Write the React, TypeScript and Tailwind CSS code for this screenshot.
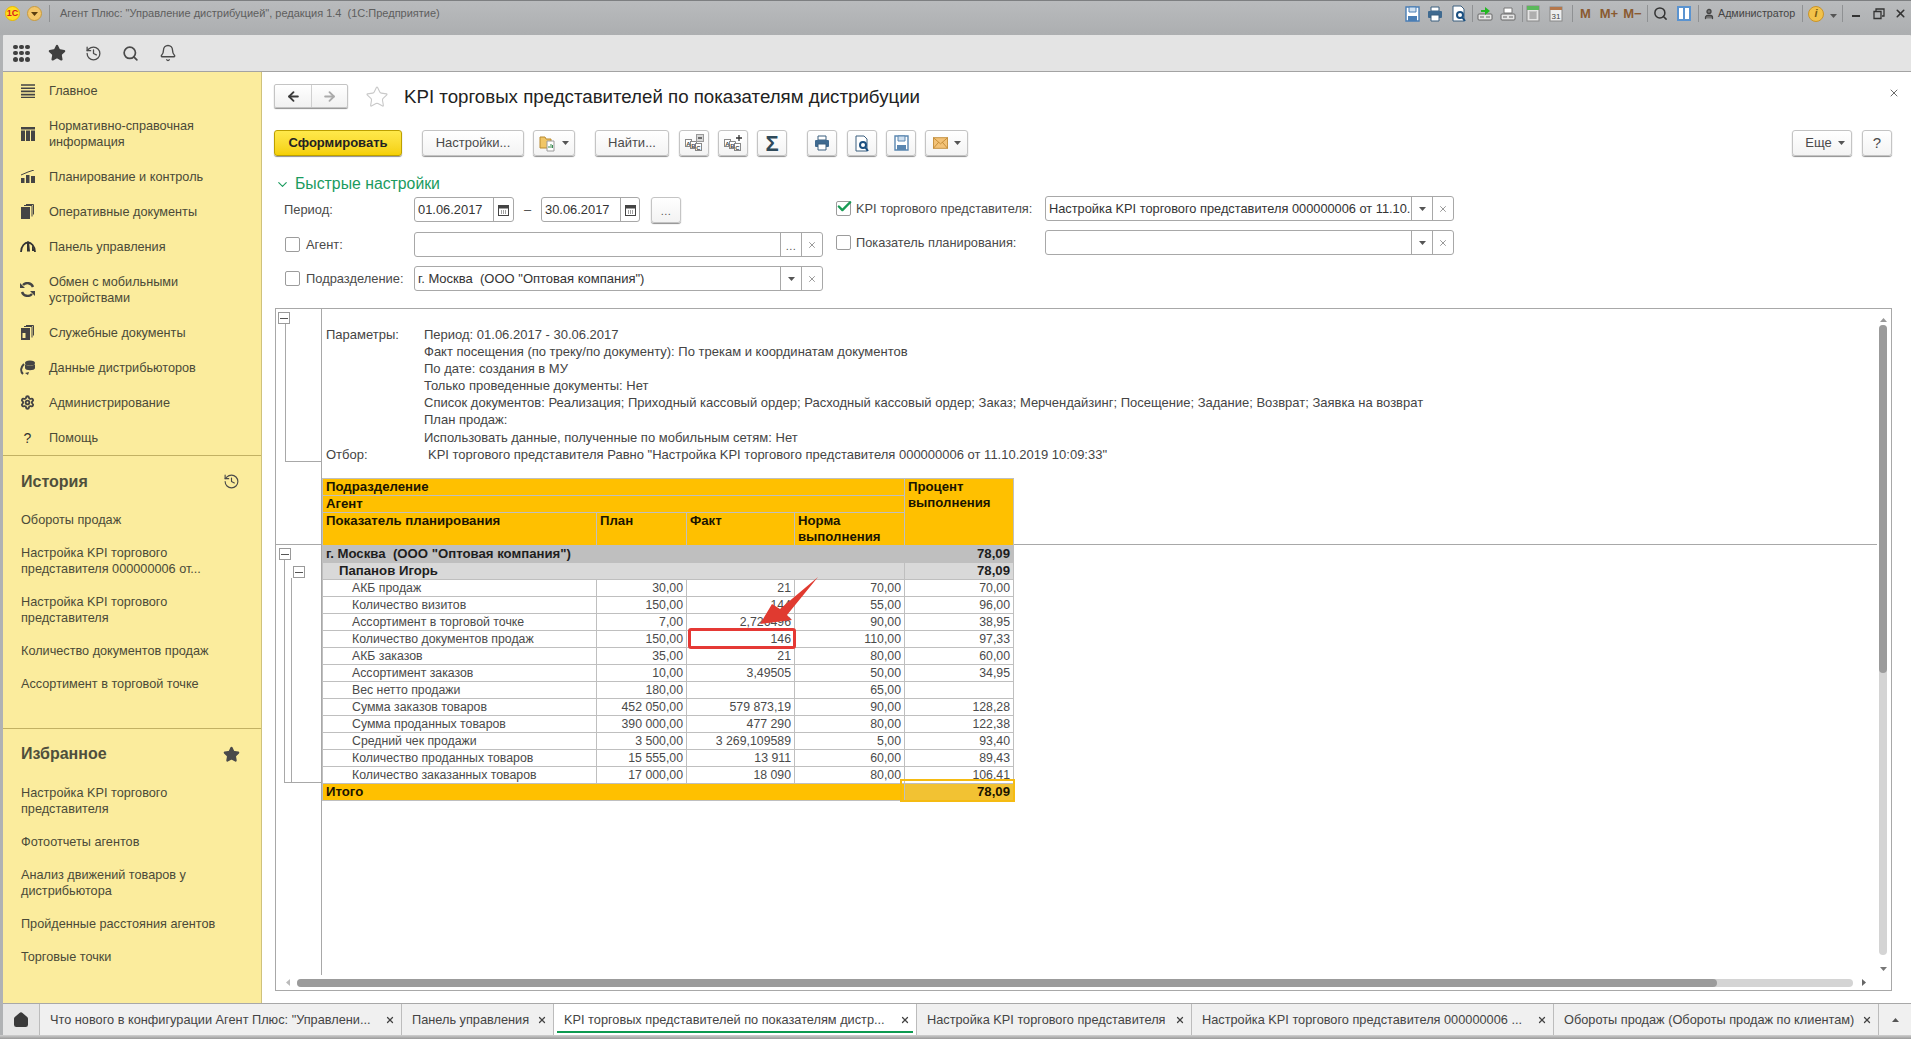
import React from "react";
import { History, Search, Bell, Star, ArrowLeft, ArrowRight, ChevronDown, Check, X, Settings, Home, User } from "lucide-react";

const Tri = ({ c = "#555" }: { c?: string }) => (
  <svg width="7" height="4" viewBox="0 0 7 4"><path d="M0 0h7L3.5 4z" fill={c} /></svg>
);
const Sep = ({ className = "" }: { className?: string }) => <div className={"w-px h-[17px] bg-[#8f9193] " + className} />;

const SaveIco = ({ c = "#4a7eb5" }: { c?: string }) => (
  <svg width="15" height="16" viewBox="0 0 15 16"><path d="M1 1h13v14H1z" fill="#fff" stroke={c} strokeWidth="1.4" /><path d="M4 1h7v5H4z" fill="#cfe0f0" stroke={c} /><path d="M3 10h9v5H3z" fill={c} /></svg>
);
const PrintIco = () => (
  <svg width="16" height="16" viewBox="0 0 16 16"><path d="M4 1h8v4H4z" fill="#fff" stroke="#3b5e7e" /><rect x="1" y="5" width="14" height="7" rx="1" fill="#3f6a90" /><path d="M4 9h8v6H4z" fill="#fff" stroke="#3b5e7e" /></svg>
);
const PreviewIco = () => (
  <svg width="16" height="17" viewBox="0 0 16 17"><path d="M2 1h8l3 3v12H2z" fill="#fff" stroke="#3b5e7e" /><circle cx="9" cy="10" r="3" fill="none" stroke="#1a4f80" strokeWidth="2" /><path d="M11 12l3 4" stroke="#1a4f80" strokeWidth="2" /></svg>
);
const PostIco = ({ green = false }: { green?: boolean }) => (
  <svg width="16" height="16" viewBox="0 0 16 16"><path d="M4 2h8v5H4z" fill={green ? "none" : "#fff"} stroke={green ? "none" : "#777"} /><rect x="1" y="8" width="14" height="6" rx="1" fill="#e6e6e6" stroke="#666" /><path d="M3 11h4M9 11h4" stroke="#666" />{green && <path d="M4 4h4V1l5 4-5 4V6H4z" fill="#22b822" />}</svg>
);
const CalcIco = () => (
  <svg width="14" height="17" viewBox="0 0 14 17"><rect x="1" y="1" width="12" height="15" fill="#e4e4e4" stroke="#888" /><path d="M1 1h12v4H1z" fill="#5cb85c" /><path d="M3 7h8M3 9h8M3 11h8M3 13h8M5 7v7M7 7v7M9 7v7" stroke="#888" strokeWidth=".7" /></svg>
);
const CalIco = () => (
  <svg width="14" height="17" viewBox="0 0 14 17"><rect x="1" y="2" width="12" height="14" fill="#eee" stroke="#888" /><path d="M1 2h12v3H1z" fill="#b5774a" /><text x="7" y="14" textAnchor="middle" fontSize="8" fill="#444" fontFamily="Liberation Sans">31</text></svg>
);
const AbcIco = ({ plus }: { plus?: boolean }) => (
  <svg width="20" height="18" viewBox="0 0 20 18">
    <rect x="1.500" y="5.500" width="6" height="7" fill="#fff" stroke="#888" />
    <rect x="6.500" y="7.500" width="6" height="7" fill="#fff" stroke="#888" />
    <rect x="11.500" y="9.500" width="6" height="7" fill="#fff" stroke="#888" />
    <text x="4.500" y="11.500" textAnchor="middle" fontSize="6" fontWeight="700" fill="#444" fontFamily="Liberation Sans">A</text>
    <text x="9.500" y="13.500" textAnchor="middle" fontSize="6" fontWeight="700" fill="#444" fontFamily="Liberation Sans">B</text>
    <text x="14.500" y="15.500" textAnchor="middle" fontSize="6" fontWeight="700" fill="#444" fontFamily="Liberation Sans">C</text>
    <rect x="12.500" y=".5" width="7" height="7" fill={plus ? "#fff" : "#d8d8d8"} stroke={plus ? "none" : "#999"} />
    <path d={plus ? "M13 4h6M16 1v6" : "M14 4h4"} stroke="#333" strokeWidth="1.3" />
  </svg>
);

const Btn = ({ className = "", children }: { className?: string; children?: React.ReactNode }) => (
  <div className={"h-[26px] flex items-center justify-center border border-[#c4c4c4] rounded-[3px] bg-gradient-to-b from-white to-[#f3f3f3] shadow-[0_1px_1px_#8f8f8f] text-[#4a4a4a] text-[13px] " + className}>{children}</div>
);

const Cb = ({ on = false }: { on?: boolean }) => (
  <div className="w-[15px] h-[15px] border border-[#9c9c9c] rounded-[2px] bg-white relative shrink-0">
    {on && <Check className="absolute left-[-1px] top-[-4px] text-[#1a9b55]" size={17} strokeWidth={3.4} />}
  </div>
);

const Cell = ({ className = "", children }: { className?: string; children?: React.ReactNode }) => (
  <div className={"flex items-center justify-center self-stretch border-l border-[#a8a8a8] text-[#666] " + className}>{children}</div>
);
const XS = () => <X size={10} strokeWidth={1.6} className="text-[#666]" />;
const Dots = () => <span className="text-[11px] text-[#555] tracking-[0.5px] mt-[3px]">...</span>;
const CalSm = () => (
  <svg width="11" height="12" viewBox="0 0 11 12"><rect x=".5" y="1.5" width="10" height="10" fill="#fff" stroke="#444" /><path d="M.5 1.5h10v3H.5z" fill="#444" /><path d="M3 7h1M5 7h1M7 7h1M3 9h1M5 9h1M7 9h1" stroke="#444" /></svg>
);
const Field = ({ className = "", children }: { className?: string; children?: React.ReactNode }) => (
  <div className={"h-[25px] flex items-stretch border border-[#a8a8a8] rounded-[3px] bg-white text-[#333] shrink-0 " + className}>{children}</div>
);

const sideNav: [string, React.ReactNode, boolean][] = [
  ["Главное", <svg width="14" height="14" viewBox="0 0 14 14"><path d="M0 1h14M0 4.200h14M0 7.400h14M0 10.600h14M0 13.500h14" stroke="#444" strokeWidth="1.6" /></svg>, false],
  ["Нормативно-справочная\nинформация", <svg width="14" height="14" viewBox="0 0 14 14"><path d="M0 0h14v2.500H0zM0 3.500h4v10.500H0zM5 3.500h4v10.500H5zM10 3.500h4v10.500h-4z" fill="#444" /></svg>, true],
  ["Планирование и контроль", <svg width="14" height="13" viewBox="0 0 14 13"><path d="M0 8h3.500v5H0zM5 5h3.500v8H5zM10 6h4v7h-4z" fill="#444" /><path d="M0 5L7 2l6-2" stroke="#444" fill="none" /></svg>, false],
  ["Оперативные документы", <svg width="13" height="15" viewBox="0 0 13 15"><path d="M0 3h9v12H0z" fill="#444" /><path d="M3 1.500h8v11M5 .5h7.500v10" stroke="#444" fill="none" /></svg>, false],
  ["Панель управления", <svg width="16" height="11" viewBox="0 0 16 11"><path d="M1 11C1 5 5 1.500 8 1.500S15 5 15 11" stroke="#333" strokeWidth="1.800" fill="none" /><path d="M7 .5h2l1 10H7z" fill="#333" /><path d="M12 4l3 6-3 0z" fill="#333" /></svg>, false],
  ["Обмен с мобильными\nустройствами", <svg width="15" height="15" viewBox="0 0 15 15"><path d="M13 5A6 6 0 0 0 3 3M2 10a6 6 0 0 0 10 2" stroke="#444" strokeWidth="2.400" fill="none" /><path d="M0 1v5h5zM15 14V9h-5z" fill="#444" /></svg>, true],
  ["Служебные документы", <svg width="13" height="15" viewBox="0 0 13 15"><path d="M0 3h9v12H0z" fill="#444" /><path d="M1.500 8h3v5h-3z" fill="#fbec9d" /><path d="M3 1.500h8v11M5 .5h7.500v10" stroke="#444" fill="none" /></svg>, false],
  ["Данные дистрибьюторов", <svg width="16" height="15" viewBox="0 0 16 15"><ellipse cx="10" cy="3" rx="5" ry="2.500" fill="#444" /><path d="M5 4v4c0 3 10 3 10 0V4c-1 2-9 2-10 0z" fill="#444" /><path d="M4 4C1 7 0 11 3 14" stroke="#444" strokeWidth="2" fill="none" /><path d="M9 12l-1 3-3-2z" fill="#444" /></svg>, false],
  ["Администрирование", <Settings size={15} strokeWidth={3} className="text-[#444]" />, false],
  ["Помощь", <span className="text-[14px] text-[#333] leading-none">?</span>, false],
];

const hist: [string, boolean][] = [
  ["Обороты продаж", false],
  ["Настройка KPI торгового\nпредставителя 000000006 от...", true],
  ["Настройка KPI торгового\nпредставителя", true],
  ["Количество документов продаж", false],
  ["Ассортимент в торговой точке", false],
];
const fav: [string, boolean][] = [
  ["Настройка KPI торгового\nпредставителя", true],
  ["Фотоотчеты агентов", false],
  ["Анализ движений товаров у\nдистрибьютора", true],
  ["Пройденные расстояния агентов", false],
  ["Торговые точки", false],
];

const params = [
  "Период: 01.06.2017 - 30.06.2017",
  "Факт посещения (по треку/по документу): По трекам и координатам документов",
  "По дате: создания в МУ",
  "Только проведенные документы: Нет",
  "Список документов: Реализация; Приходный кассовый ордер; Расходный кассовый ордер; Заказ; Мерчендайзинг; Посещение; Задание; Возврат; Заявка на возврат",
  "План продаж:",
  "Использовать данные, полученные по мобильным сетям: Нет",
];

const rows = [
  ["АКБ продаж", "30,00", "21", "70,00", "70,00"],
  ["Количество визитов", "150,00", "144", "55,00", "96,00"],
  ["Ассортимент в торговой точке", "7,00", "2,726496", "90,00", "38,95"],
  ["Количество документов продаж", "150,00", "146", "110,00", "97,33"],
  ["АКБ заказов", "35,00", "21", "80,00", "60,00"],
  ["Ассортимент заказов", "10,00", "3,49505", "50,00", "34,95"],
  ["Вес нетто продажи", "180,00", "", "65,00", ""],
  ["Сумма заказов товаров", "452 050,00", "579 873,19", "90,00", "128,28"],
  ["Сумма проданных товаров", "390 000,00", "477 290", "80,00", "122,38"],
  ["Средний чек продажи", "3 500,00", "3 269,109589", "5,00", "93,40"],
  ["Количество проданных товаров", "15 555,00", "13 911", "60,00", "89,43"],
  ["Количество заказанных товаров", "17 000,00", "18 090", "80,00", "106,41"],
];

const Cols = () => (
  <colgroup>
    <col className="w-[274px]" /><col className="w-[90px]" /><col className="w-[108px]" /><col className="w-[110px]" /><col className="w-[109px]" />
  </colgroup>
);
const tdN = "h-[17px] p-0 px-[3px] border border-[#bfbfbf] text-[12.3px] leading-[14px] whitespace-nowrap overflow-hidden";
const tdB = "h-[17px] p-0 px-[3px] border border-[#bfbfbf] text-[13.2px] leading-[16px] whitespace-nowrap overflow-hidden";
const Minus = () => (
  <div className="w-[12px] h-[12px] border border-[#9a9a9a] bg-white flex items-center justify-center shrink-0"><div className="w-[8px] h-px bg-[#555]" /></div>
);

const tabs: [string, string, boolean][] = [
  ["Что нового в конфигурации Агент Плюс: \"Управлени...", "w-[362px]", false],
  ["Панель управления", "w-[152px]", false],
  ["KPI торговых представителей по показателям дистр...", "w-[363px]", true],
  ["Настройка KPI торгового представителя", "w-[275px]", false],
  ["Настройка KPI торгового представителя 000000006 ...", "w-[362px]", false],
  ["Обороты продаж (Обороты продаж по клиентам)", "w-[325px]", false],
];

export default function App() {
  return (
    <div className="w-[1911px] h-[1039px] overflow-hidden flex flex-col font-['Liberation_Sans',Arial,sans-serif] bg-[#b0b2b4]">
      {/* title bar */}
      <div className="h-[35px] shrink-0 flex items-center pb-[9px] border-t border-[#7d7f81] bg-gradient-to-b from-[#b9bbbd] to-[#acaeb0] text-[11px] text-[#5e5e5e]">
        <div className="ml-[5px] w-[15px] h-[15px] rounded-full bg-[#ffdd22] border border-[#e8b800] flex items-center justify-center text-[9px] font-bold text-[#d8201c] leading-none">1С</div>
        <div className="ml-[7px] w-[15px] h-[15px] rounded-full bg-[#f3c66a] border border-[#c69a40] flex items-center justify-center"><Tri c="#5a3e10" /></div>
        <Sep className="ml-[7px]" />
        <span className="ml-[10px] w-[1341px] shrink-0">Агент Плюс: "Управление дистрибуцией", редакция 1.4&nbsp; (1С:Предприятие)</span>
        <div className="flex items-center">
          <div className="w-[23px] flex justify-center"><SaveIco /></div>
          <div className="w-[22px] flex justify-center"><PrintIco /></div>
          <div className="w-[26px] flex justify-center"><PreviewIco /></div>
          <Sep />
          <div className="w-[24px] flex justify-center"><PostIco green /></div>
          <div className="w-[22px] flex justify-center"><PostIco /></div>
          <Sep className="ml-[3px]" />
          <div className="w-[20px] flex justify-center"><CalcIco /></div>
          <div className="w-[26px] flex justify-center"><CalIco /></div>
          <Sep className="ml-[3px]" />
          <div className="ml-[1px] w-[23px] text-center font-bold text-[13px] text-[#8a5a30]">M</div>
          <div className="w-[24px] text-center font-bold text-[13px] text-[#8a5a30]">M+</div>
          <div className="w-[23px] text-center font-bold text-[13px] text-[#8a5a30]">M−</div>
          <Sep className="ml-[3px]" />
          <div className="w-[24px] flex justify-center"><Search size={15} strokeWidth={2.4} className="text-[#333]" /></div>
          <div className="w-[23px] flex justify-center"><div className="w-[14px] h-[15px] border-2 border-[#5a93d0] bg-white flex justify-center"><div className="w-[2px] bg-[#5a93d0]" /></div></div>
          <Sep className="ml-[3px]" />
          <User size={12} strokeWidth={2.6} className="ml-[4px] text-[#444] fill-[#777]" />
          <span className="ml-[3px] w-[78px] text-[10.7px] text-[#444] whitespace-nowrap">Администратор</span>
          <Sep className="ml-[6px]" />
          <div className="ml-[5px] w-[16px] h-[16px] rounded-full bg-[#f2c24a] border border-[#c9942a] flex items-center justify-center text-[11px] font-bold italic text-[#7a5a10]">i</div>
          <div className="ml-[6px] mt-[5px]"><Tri /></div>
          <Sep className="ml-[5px]" />
          <div className="ml-[9px] w-[8px] h-[2px] bg-[#333] mt-[5px]" />
          <svg className="ml-[13px]" width="12" height="12" viewBox="0 0 12 12"><path d="M3 3V1h8v7H9M1 3.500h7v7H1z" fill="none" stroke="#333" strokeWidth="1.300" /></svg>
          <X className="ml-[9px] text-[#333]" size={13} strokeWidth={3} />
        </div>
      </div>
      {/* toolbar */}
      <div className="h-[37px] shrink-0 ml-[3px] flex items-center bg-[#e4e4e4] border-b border-[#a3a3a3] rounded-t-[1px]">
        <div className="ml-[10px] w-[17px] h-[17px] grid grid-cols-3 gap-[1.500px]">
          {[0, 1, 2, 3, 4, 5, 6, 7, 8].map((i) => <div key={i} className="rounded-full bg-[#3f3f3f]" />)}
        </div>
        <Star className="ml-[18px] text-[#3f3f3f] fill-[#3f3f3f]" size={18} />
        <History className="ml-[19px] text-[#4a4a4a]" size={17} strokeWidth={1.8} />
        <Search className="ml-[20px] text-[#4a4a4a]" size={17} strokeWidth={2.4} />
        <Bell className="ml-[20px] text-[#4a4a4a]" size={18} strokeWidth={1.8} />
      </div>
      {/* middle */}
      <div className="flex-1 min-h-0 ml-[3px] flex">
        <aside className="w-[259px] shrink-0 bg-[#fbec9d] border-r border-[#cfc27c] flex flex-col text-[12.7px] leading-[16px] text-[#4a4a38]">
          <nav className="pt-[1px] border-b border-[#c2b163]">
            {sideNav.map(([t, ico, dbl]) => (
              <div key={t} className={"flex items-center " + (dbl ? "h-[51px]" : "h-[35px]")}>
                <div className="w-[46px] pl-[3px] flex justify-center shrink-0">{ico}</div>
                <span className="whitespace-pre-line">{t}</span>
              </div>
            ))}
          </nav>
          <div className="h-[273px] border-b border-[#c2b163] pl-[18px]">
            <div className="h-[47px] pt-[4px] flex items-center justify-between pr-[21px] font-bold text-[16px] text-[#4f4f3c]">
              <span>История</span><History size={17} strokeWidth={1.6} className="text-[#4a4a4a]" />
            </div>
            {hist.map(([t, dbl]) => (
              <div key={t} className={"flex items-center whitespace-pre-line " + (dbl ? "h-[49px]" : "h-[33px]")}>{t}</div>
            ))}
          </div>
          <div className="pl-[18px]">
            <div className="h-[47px] pt-[3px] flex items-center justify-between pr-[21px] font-bold text-[16px] text-[#4f4f3c]">
              <span>Избранное</span><Star size={17} className="text-[#4a4a4a] fill-[#4a4a4a]" />
            </div>
            {fav.map(([t, dbl]) => (
              <div key={t} className={"flex items-center whitespace-pre-line " + (dbl ? "h-[49px]" : "h-[33px]")}>{t}</div>
            ))}
          </div>
        </aside>
        <main className="flex-1 min-w-0 bg-white pl-[12px] pr-[19px] flex flex-col">
          {/* header */}
          <div className="h-[24px] mt-[12px] flex items-center shrink-0">
            <div className="w-[74px] h-[24px] flex border border-[#c4c4c4] rounded-[2px] shadow-[0_1px_1px_#8f8f8f] bg-gradient-to-b from-white to-[#f1f1f1]">
              <div className="w-[37px] flex items-center justify-center border-r border-[#d0d0d0]"><ArrowLeft size={15} strokeWidth={3} className="text-[#3a3a3a]" /></div>
              <div className="flex-1 flex items-center justify-center"><ArrowRight size={15} strokeWidth={3} className="text-[#aaa]" /></div>
            </div>
            <Star className="ml-[17px] mt-[2px] text-[#c9c9c9]" size={24} strokeWidth={1.1} />
            <h1 className="ml-[15px] mt-[3px] text-[18.7px] font-normal text-[#222]">KPI торговых представителей по показателям дистрибуции</h1>
            <X size={12} strokeWidth={1.6} className="ml-auto mr-[-8px] mb-[6px] text-[#444]" />
          </div>
          {/* commands */}
          <div className="mt-[22px] flex shrink-0 items-center">
            <div className="w-[128px] h-[26px] flex items-center justify-center rounded-[3px] border border-[#bda000] bg-gradient-to-b from-[#ffe94a] to-[#f5d000] shadow-[0_1px_1px_#8f8f8f] font-bold text-[13px] text-[#222]">Сформировать</div>
            <Btn className="ml-[20px] w-[102px]">Настройки...</Btn>
            <Btn className="ml-[9px] w-[42px] gap-[5px]">
              <svg width="18" height="18" viewBox="0 0 18 18"><path d="M1 3h5l1 2h5v9H1z" fill="#f1c667" stroke="#b88a30" /><path d="M8 7h7v10H8z" fill="#fff" stroke="#999" /><path d="M10 14v-2M12 14v-4M13.500 14v-3" stroke="#3a8a50" /></svg>
              <Tri />
            </Btn>
            <Btn className="ml-[20px] w-[74px]">Найти...</Btn>
            <Btn className="ml-[10px] w-[30px]"><AbcIco /></Btn>
            <Btn className="ml-[9px] w-[30px]"><AbcIco plus /></Btn>
            <Btn className="ml-[9px] w-[30px] text-[22px] font-bold !text-[#2f4a5a]">Σ</Btn>
            <Btn className="ml-[20px] w-[30px]"><PrintIco /></Btn>
            <Btn className="ml-[10px] w-[30px]"><PreviewIco /></Btn>
            <Btn className="ml-[9px] w-[30px]"><SaveIco c="#5a86b0" /></Btn>
            <Btn className="ml-[9px] w-[43px] gap-[6px]">
              <svg width="15" height="12" viewBox="0 0 17 13"><rect x=".5" y=".5" width="16" height="12" fill="#f3c277" stroke="#c08a35" /><path d="M.5 .5l8 7 8-7M.5 12.500l6-7M16.500 12.500l-6-7" stroke="#c08a35" fill="none" /></svg>
              <Tri />
            </Btn>
            <Btn className="ml-auto w-[60px] gap-[6px] pl-[6px]">Еще <Tri /></Btn>
            <Btn className="ml-[10px] w-[30px] text-[15px]">?</Btn>
          </div>
          {/* quick */}
          <div className="mt-[18px] h-[20px] flex items-center shrink-0 text-[15.8px] text-[#1a9b5e]">
            <ChevronDown size={15} strokeWidth={1.8} className="ml-[1px]" />
            <span className="ml-[5px]">Быстрые настройки</span>
          </div>
          <div className="mt-[2px] flex shrink-0 text-[12.9px] text-[#4a4a4a]">
            <div className="mt-[1px] w-[562px] shrink-0 flex flex-col">
              <div className="h-[25px] flex items-center">
                <span className="ml-[10px] w-[130px] shrink-0">Период:</span>
                <Field className="w-[100px]"><span className="w-[78px] pl-[3px] leading-[23px]">01.06.2017</span><Cell className="flex-1"><CalSm /></Cell></Field>
                <span className="w-[27px] text-center">–</span>
                <Field className="w-[99px]"><span className="w-[78px] pl-[3px] leading-[23px]">30.06.2017</span><Cell className="flex-1"><CalSm /></Cell></Field>
                <Btn className="ml-[11px] w-[30px] h-[26px]"><Dots /></Btn>
              </div>
              <div className="h-[25px] mt-[10px] flex items-center">
                <div className="ml-[11px]"><Cb /></div>
                <span className="ml-[6px] w-[108px] shrink-0">Агент:</span>
                <Field className="w-[409px]"><span className="flex-1" /><Cell className="w-[21px]"><Dots /></Cell><Cell className="w-[21px]"><XS /></Cell></Field>
              </div>
              <div className="h-[25px] mt-[9px] flex items-center">
                <div className="ml-[11px]"><Cb /></div>
                <span className="ml-[6px] w-[108px] shrink-0">Подразделение:</span>
                <Field className="w-[409px]"><span className="flex-1 pl-[3px] leading-[23px] text-[13px]">г. Москва&nbsp; (ООО "Оптовая компания")</span><Cell className="w-[21px]"><Tri /></Cell><Cell className="w-[21px]"><XS /></Cell></Field>
              </div>
            </div>
            <div className="flex flex-col text-[12.8px]">
              <div className="h-[25px] flex items-center">
                <Cb on />
                <span className="ml-[5px] w-[189px] shrink-0">KPI торгового представителя:</span>
                <Field className="w-[409px]"><span className="flex-1 pl-[3px] leading-[23px] overflow-hidden whitespace-nowrap">Настройка KPI торгового представителя 000000006 от 11.10.</span><Cell className="w-[21px]"><Tri /></Cell><Cell className="w-[21px]"><XS /></Cell></Field>
              </div>
              <div className="h-[25px] mt-[9px] flex items-center">
                <Cb />
                <span className="ml-[5px] w-[189px] shrink-0">Показатель планирования:</span>
                <Field className="w-[409px]"><span className="flex-1" /><Cell className="w-[21px]"><Tri /></Cell><Cell className="w-[21px]"><XS /></Cell></Field>
              </div>
            </div>
          </div>
          {/* report */}
          <div className="ml-px mt-[17px] h-[683px] shrink-0 border border-[#a8a8a8] flex flex-col text-[#444]">
            <div className="flex-1 min-h-0 flex">
              <div className="flex-1 min-w-0 flex flex-col">
                <div className="h-[236px] shrink-0 flex border-b border-[#a8a8a8]">
                  <div className="w-[46px] shrink-0 border-r border-[#a8a8a8]">
                    <div className="ml-[2px] mt-[3px]"><Minus /></div>
                    <div className="ml-[9px] w-[36px] h-[138px] border-l border-b border-[#a8a8a8]" />
                  </div>
                  <div className="flex-1 min-w-0">
                    <div className="pt-[17px] pl-[4px] text-[13px] leading-[17.100px] text-[#444]">
                      <div className="flex"><span className="w-[98px] shrink-0">Параметры:</span><div>{params.map((p) => <div key={p} className="whitespace-nowrap">{p}</div>)}</div></div>
                      <div className="flex"><span className="w-[102px] shrink-0">Отбор:</span><span className="whitespace-nowrap">KPI торгового представителя Равно "Настройка KPI торгового представителя 000000006 от 11.10.2019 10:09:33"</span></div>
                    </div>
                    <table className="mt-[15px] table-fixed border-collapse w-[691px] bg-[#ffc000] text-[#1a1400] font-bold">
                      <Cols />
                      <tbody>
                        <tr><td colSpan={4} className={tdB}>Подразделение</td><td rowSpan={3} className={tdB + " align-top"}>Процент<br />выполнения</td></tr>
                        <tr><td colSpan={4} className={tdB}>Агент</td></tr>
                        <tr className="align-top">
                          <td className={tdB}>Показатель планирования</td>
                          <td className={tdB}>План</td>
                          <td className={tdB}>Факт</td>
                          <td className={tdB}>Норма<br />выполнения</td>
                        </tr>
                      </tbody>
                    </table>
                  </div>
                </div>
                <div className="flex-1 min-h-0 flex">
                  <div className="w-[46px] shrink-0 border-r border-[#a8a8a8]">
                    <div className="ml-[3px] mt-[3px]"><Minus /></div>
                    <div className="ml-[8px] w-[37px] h-[223px] border-l border-b border-[#a8a8a8]">
                      <div className="ml-[8px] pt-[6px]"><Minus /></div>
                      <div className="ml-[6px] h-[205px] border-l border-[#a8a8a8]" />
                    </div>
                  </div>
                  <div className="flex-1 min-w-0">
                    <div className="relative w-[700px]">
                      <table className="table-fixed border-collapse w-[691px] text-[#4a4a4a]">
                        <Cols />
                        <tbody>
                          <tr className="bg-[#bfbfbf] font-bold text-[#1e1e1e]">
                            <td colSpan={4} className={tdB}>г. Москва&nbsp; (ООО "Оптовая компания")</td>
                            <td className={tdB + " text-right"}>78,09</td>
                          </tr>
                          <tr className="bg-[#d9d9d9] font-bold text-[#1e1e1e]">
                            <td colSpan={4} className={tdB + " pl-[16px]"}>Папанов Игорь</td>
                            <td className={tdB + " text-right"}>78,09</td>
                          </tr>
                          {rows.map((r) => (
                            <tr key={r[0]}>
                              <td className={tdN + " pl-[29px]"}>{r[0]}</td>
                              <td className={tdN + " text-right"}>{r[1]}</td>
                              <td className={tdN + " text-right"}>{r[2]}</td>
                              <td className={tdN + " text-right"}>{r[3]}</td>
                              <td className={tdN + " text-right"}>{r[4]}</td>
                            </tr>
                          ))}
                          <tr className="bg-[#ffc000] font-bold text-[#1a1400]">
                            <td colSpan={4} className={tdB}>Итого</td>
                            <td className={tdB + " text-right bg-[#f2c233]"}>78,09</td>
                          </tr>
                        </tbody>
                      </table>
                      <div className="absolute left-[366px] top-[83px] w-[108px] h-[21px] border-[3px] border-[#e53935] rounded-[3px]" />
                      <div className="absolute left-[578px] top-[234px] w-[115px] h-[23px] border-2 border-[#f5bb12]" />
                      <svg className="absolute left-[433px] top-[29px]" width="70" height="55" viewBox="0 0 70 55">
                        <path d="M5 50L17 30l8 5L63 3 32 41l5 5z" fill="#e03a30" />
                      </svg>
                    </div>
                  </div>
                </div>
              </div>
              <div className="w-[14px] shrink-0 flex flex-col items-center relative pr-[2px]">
                <div className="mt-[9px]"><div className="rotate-180"><Tri c="#999" /></div></div>
                <div className="mt-[3px] w-[8px] flex-1 rounded-full bg-[#d4d4d4] mb-[12px]">
                  <div className="w-[8px] h-[348px] rounded-full bg-[#9b9b9b]" />
                </div>
                <div className="mb-[4px]"><Tri c="#777" /></div>
              </div>
            </div>
            <div className="h-[15px] shrink-0 flex items-center">
              <svg className="ml-[10px]" width="4" height="7" viewBox="0 0 4 7"><path d="M4 0v7L0 3.500z" fill="#bbb" /></svg>
              <div className="ml-[7px] w-[1556px] h-[8px] rounded-full bg-[#d4d4d4]">
                <div className="w-[1420px] h-[8px] rounded-full bg-[#9b9b9b]" />
              </div>
              <svg className="ml-[9px]" width="4" height="7" viewBox="0 0 4 7"><path d="M0 0v7l4-3.500z" fill="#666" /></svg>
            </div>
          </div>
        </main>
      </div>
      {/* tabs */}
      <div className="h-[32px] shrink-0 ml-[3px] flex border-t border-[#a8a8a8] bg-[#f0f0f0] text-[12.750px] text-[#444]">
        <div className="w-[37px] shrink-0 flex items-center justify-center border-r border-[#bcbcbc] bg-[#e6e6e6]"><Home size={16} strokeWidth={3} className="text-[#3a3a3a] fill-[#3a3a3a]" /></div>
        {tabs.map(([t, w, active]) => (
          <div key={t} className={w + " shrink-0 relative flex items-center justify-between pl-[10px] pr-[6px] border-r border-[#bcbcbc] " + (active ? "bg-white" : "")}>
            <span className="whitespace-nowrap overflow-hidden">{t}</span>
            <X size={10} strokeWidth={3} className="text-[#444] shrink-0" />
            {active && <div className="absolute left-[3px] right-[3px] bottom-[2px] h-[2px] bg-[#0d9a50]" />}
          </div>
        ))}
        <div className="flex-1 flex items-center justify-center"><div className="rotate-180"><Tri /></div></div>
      </div>
      <div className="h-[4px] shrink-0 bg-gradient-to-b from-[#d0d0d0] to-[#9a9a9a]" />
    </div>
  );
}
